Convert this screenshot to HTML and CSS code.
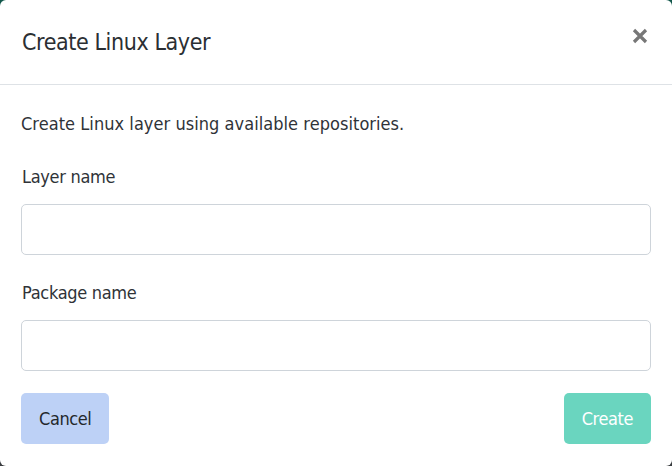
FILE: index.html
```html
<!DOCTYPE html>
<html lang="en">
<head>
    <meta charset="UTF-8">
    <title>Create Linux Layer</title>
    <link rel="stylesheet" href="styles.css">
</head>
<body>
    <div class="modal">
        <div class="modal-header">
            <h2 class="modal-title">Create Linux Layer</h2>
            <button class="close" aria-label="Close">
                <svg width="16" height="16" viewBox="0 0 16 16">
                    <path d="M2 2L14 14M14 2L2 14" stroke="currentColor" stroke-width="3.2" stroke-linecap="butt"/>
                </svg>
            </button>
        </div>
        <div class="modal-body">
            <p class="intro">Create Linux layer using available repositories.</p>
            <div class="fields">
                <div class="field">
                    <label for="layer-name">Layer name</label>
                    <input type="text" id="layer-name">
                </div>
                <div class="field">
                    <label for="package-name">Package name</label>
                    <input type="text" id="package-name">
                </div>
            </div>
            <div class="actions">
                <button class="btn btn-cancel">Cancel</button>
                <button class="btn btn-create">Create</button>
            </div>
        </div>
    </div>
</body>
</html>
```

FILE: styles.css
```css
:root {
    --fg: #2f3338;
    --border: #dee2e6;
    --input-border: #ced4da;
    --cancel: #bdd1f6;
    --create: #6ad5bf;
}

* {
    margin: 0;
    padding: 0;
    box-sizing: border-box;
    font-family: "DejaVu Sans Condensed", "Liberation Sans Narrow", "Roboto", sans-serif;
}

body {
    width: 672px;
    height: 466px;
    overflow: hidden;
    background: linear-gradient(#12574b, #1e4a44 40%, #3a3d40);
}

.modal {
    width: 672px;
    height: 466px;
    background: #fff;
    border-radius: 6px;
    color: var(--fg);
}

.modal-header {
    height: 85px;
    padding: 0 22px;
    border-bottom: 1px solid var(--border);
    display: flex;
    align-items: center;
    justify-content: space-between;
}

.modal-title {
    font-size: 23px;
    font-weight: normal;
    letter-spacing: -0.4px;
    color: #2b2f33;
}

.close {
    border: none;
    background: none;
    color: #777;
    width: 16px;
    height: 16px;
    margin-right: 2px;
    margin-bottom: 13px;
    cursor: pointer;
}

.close svg {
    display: block;
}

.modal-body {
    padding: 25px 21px 0;
}

.intro {
    font-size: 18px;
    line-height: 28px;
    letter-spacing: 0.05px;
    margin-bottom: 27px;
}

.fields {
    display: flex;
    flex-direction: column;
    gap: 26px;
    margin-bottom: 22px;
}

.field {
    display: flex;
    flex-direction: column;
    gap: 15px;
}

.field label {
    font-size: 18px;
    line-height: 24px;
    letter-spacing: -0.3px;
    padding-left: 1px;
}

.field input {
    height: 51px;
    border: 1px solid var(--input-border);
    border-radius: 5px;
    padding: 0 14px;
    font-size: 18px;
    outline: none;
}

.actions {
    display: flex;
    justify-content: space-between;
}

.btn {
    height: 51px;
    padding: 0 18px;
    border: none;
    border-radius: 5px;
    font-size: 18px;
    letter-spacing: -0.4px;
    cursor: pointer;
}

.btn-cancel {
    background: var(--cancel);
    color: #24282c;
}

.btn-create {
    background: var(--create);
    color: #fff;
}
```
